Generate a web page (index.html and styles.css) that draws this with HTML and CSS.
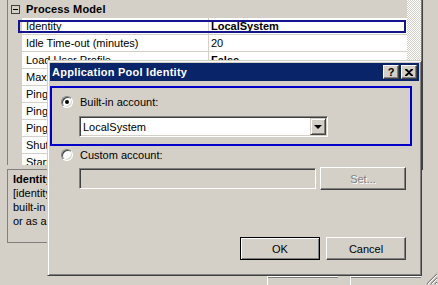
FILE: index.html
```html
<!DOCTYPE html>
<html>
<head>
<meta charset="utf-8">
<title>Application Pool Identity</title>
<link rel="stylesheet" href="styles.css">
</head>
<body>
<div class="screen">
  <div class="back-main">
    <div class="pgrid">
      <div class="rows">
        <div class="cat-row"><span class="toggle"></span><span class="cat-title">Process Model</span></div>
        <div class="prop selected"><span class="gut"></span><span class="name">Identity</span><span class="val bold">LocalSystem</span></div>
        <div class="prop"><span class="gut"></span><span class="name">Idle Time-out (minutes)</span><span class="val">20</span></div>
        <div class="prop"><span class="gut"></span><span class="name">Load User Profile</span><span class="val bold">False</span></div>
        <div class="prop"><span class="gut"></span><span class="name">Maximum Worker Processes</span><span class="val">1</span></div>
        <div class="prop"><span class="gut"></span><span class="name">Ping Enabled</span><span class="val">True</span></div>
        <div class="prop"><span class="gut"></span><span class="name">Ping Maximum Response Time (seconds)</span><span class="val">90</span></div>
        <div class="prop"><span class="gut"></span><span class="name">Ping Period (seconds)</span><span class="val">30</span></div>
        <div class="prop"><span class="gut"></span><span class="name">Shutdown Time Limit (seconds)</span><span class="val">90</span></div>
        <div class="prop"><span class="gut"></span><span class="name">Startup Time Limit (seconds)</span><span class="val">90</span></div>
      </div>
      <div class="vscroll"></div>
    </div>
    <div class="desc">
      <div class="desc-title">Identity</div>
      <div>[identityType, username, password] Configures the application pool to run as<br>built-in account, i.e. Network Service (recommended), Local System, Local Service,<br>or as a specific user identity.</div>
    </div>
    <div class="back-buttons">
      <span class="back-btn first"></span>
      <span class="back-btn second"></span>
    </div>
  </div>
  <div class="right-strip">
    <div class="strip-line"></div>
    <div class="grip">
      <svg width="12" height="12" viewBox="0 0 12 12">
        <path d="M11 1 L1 11 M11 5 L5 11 M11 9 L9 11" stroke="#808080" stroke-width="1.2" fill="none"/>
        <path d="M11 2 L2 11 M11 6 L6 11 M11 10 L10 11" stroke="#ffffff" stroke-width="1" fill="none"/>
      </svg>
    </div>
  </div>

  <div class="dialog">
    <div class="titlebar">
      <span class="title-text">Application Pool Identity</span>
      <span class="cap-btn help">?</span>
      <span class="cap-btn close">
        <svg width="8" height="7" viewBox="0 0 8 7"><path d="M0 0h2l2 2 2-2h2v1L5 3.5 8 6v1H6L4 5 2 7H0V6l3-2.5L0 1z" fill="#000"/></svg>
      </span>
    </div>
    <div class="client">
      <div class="focus-box">
        <div class="radio-row">
          <span class="radio checked"></span>
          <span class="radio-label">Built-in account:</span>
        </div>
        <div class="combo">
          <span class="combo-text">LocalSystem</span>
          <span class="combo-btn"><span class="arrow"></span></span>
        </div>
      </div>
      <div class="radio-row custom">
        <span class="radio"></span>
        <span class="radio-label">Custom account:</span>
      </div>
      <div class="custom-row">
        <span class="textbox disabled"></span>
        <span class="btn set disabled">Set...</span>
      </div>
      <div class="action-row">
        <span class="btn default">OK</span>
        <span class="btn">Cancel</span>
      </div>
    </div>
  </div>
</div>
</body>
</html>
```

FILE: styles.css
```css
* { box-sizing: border-box; margin: 0; padding: 0; }
html, body { width: 438px; height: 285px; overflow: hidden; background: #d4d0c8; }
body {
  font-family: "Liberation Sans", Arial, sans-serif;
  font-size: 11px;
  color: #000;
}
.screen {
  position: relative;
  width: 438px;
  height: 285px;
  overflow: hidden;
  display: flex;
}

/* ---------- underlying property grid ---------- */
.back-main {
  width: 421px;
  flex: none;
  display: flex;
  flex-direction: column;
  padding-left: 7px;
}
.pgrid {
  height: 165px;
  flex: none;
  display: flex;
  border-left: 1px solid #808080;
  overflow: hidden;
}
.rows { width: 399px; flex: none; display: flex; flex-direction: column; }
.cat-row {
  height: 18px;
  flex: none;
  display: flex;
  align-items: flex-start;
  background: #d4d0c8;
}
.toggle {
  position: relative;
  width: 9px;
  height: 9px;
  margin: 5px 0 0 3px;
  border: 1px solid #404040;
  flex: none;
}
.toggle::after {
  content: "";
  position: absolute;
  left: 1px;
  top: 3px;
  width: 5px;
  height: 1px;
  background: #000;
}
.cat-title { margin-left: 6px; font-weight: bold; line-height: 18px; letter-spacing: 0.15px; }
.prop { height: 17px; flex: none; display: flex; position: relative; }
.gut { width: 14px; flex: none; background: #d4d0c8; }
.name {
  width: 187px;
  flex: none;
  background: #fff;
  border-right: 1px solid #d4d0c8;
  border-bottom: 1px solid #d4d0c8;
  padding-left: 4px;
  line-height: 16px;
  white-space: nowrap;
  overflow: hidden;
}
.val {
  flex: 1;
  background: #fff;
  border-bottom: 1px solid #d4d0c8;
  padding-left: 2px;
  line-height: 16px;
  white-space: nowrap;
}
.bold { font-weight: bold; }
.selected::after {
  content: "";
  position: absolute;
  left: 10px;
  right: 1px;
  top: 2px;
  bottom: 2px;
  border: 2px solid #14148f;
}
.vscroll {
  width: 14px;
  flex: none;
  background-color: #fff;
  background-image: repeating-conic-gradient(#d4d0c8 0 25%, #ffffff 0 50%);
  background-size: 2px 2px;
}
.desc {
  margin-top: 4px;
  height: 74px;
  flex: none;
  border: 1px solid #808080;
  padding: 2px 5px;
  line-height: 14px;
  white-space: nowrap;
  overflow: hidden;
}
.desc-title { font-weight: bold; }
.back-buttons {
  margin-top: 33px;
  display: flex;
  padding-left: 260px;
  gap: 12px;
}
.back-btn {
  width: 73px;
  height: 12px;
  border-top: 1px solid #ffffff;
  border-left: 1px solid #ffffff;
  box-shadow: inset 0 1px 0 #808080;
}

.right-strip {
  width: 17px;
  flex: none;
  display: flex;
  flex-direction: column;
  justify-content: space-between;
  align-items: flex-end;
}
.strip-line {
  align-self: flex-start;
  width: 2px;
  height: 170px;
  border-left: 1px solid #808080;
  background: #404040;
}
.grip { width: 12px; height: 12px; display: flex; }

/* ---------- dialog ---------- */
.dialog {
  position: absolute;
  left: 47px;
  top: 60px;
  width: 375px;
  height: 216px;
  background: #d4d0c8;
  border: 1px solid;
  border-color: #d4d0c8 #404040 #404040 #d4d0c8;
  box-shadow: inset 1px 1px 0 #ffffff, inset -1px -1px 0 #808080;
  padding: 2px;
  display: flex;
  flex-direction: column;
}
.titlebar {
  height: 18px;
  flex: none;
  background: #0a246a;
  display: flex;
  align-items: center;
  padding: 0 2px 0 2px;
}
.title-text {
  color: #fff;
  font-weight: bold;
  letter-spacing: 0.25px;
  flex: 1;
  white-space: nowrap;
}
.cap-btn {
  width: 16px;
  height: 14px;
  flex: none;
  background: #d4d0c8;
  border: 1px solid;
  border-color: #ffffff #404040 #404040 #ffffff;
  box-shadow: inset -1px -1px 0 #808080;
  display: flex;
  align-items: center;
  justify-content: center;
  font-weight: bold;
  font-size: 11px;
  line-height: 12px;
}
.cap-btn.close { margin-left: 2px; }
.cap-btn.close svg { display: block; }

.client {
  flex: 1;
  display: flex;
  flex-direction: column;
}
.focus-box {
  margin-top: 5px;
  width: 362px;
  height: 60px;
  border: 2px solid #0000c8;
  display: flex;
  flex-direction: column;
}
.radio-row {
  display: flex;
  align-items: center;
  height: 12px;
  margin: 8px 0 0 9px;
}
.radio-row.custom { margin: 3px 0 0 11px; }
.radio {
  position: relative;
  width: 12px;
  height: 12px;
  flex: none;
  border-radius: 50%;
  background: #fff;
  border: 1px solid;
  border-color: #808080 #ffffff #ffffff #808080;
  box-shadow: inset 1px 1px 0 #404040, inset -1px -1px 0 #d4d0c8;
}
.radio.checked::after {
  content: "";
  position: absolute;
  left: 3px;
  top: 3px;
  width: 4px;
  height: 4px;
  border-radius: 50%;
  background: #000;
}
.radio-label { margin-left: 7px; white-space: nowrap; }

.combo {
  margin: 8px 0 0 27px;
  width: 249px;
  height: 21px;
  background: #fff;
  border: 1px solid;
  border-color: #808080 #ffffff #ffffff #808080;
  box-shadow: inset 1px 1px 0 #404040, inset -1px -1px 0 #d4d0c8;
  padding: 1px;
  display: flex;
  align-items: center;
}
.combo-text { flex: 1; padding-left: 2px; }
.combo-btn {
  width: 16px;
  height: 17px;
  flex: none;
  background: #d4d0c8;
  border: 1px solid;
  border-color: #d4d0c8 #404040 #404040 #d4d0c8;
  box-shadow: inset 1px 1px 0 #ffffff, inset -1px -1px 0 #808080;
  display: flex;
  align-items: center;
  justify-content: center;
}
.arrow {
  width: 0;
  height: 0;
  border-left: 4px solid transparent;
  border-right: 4px solid transparent;
  border-top: 4px solid #000;
}

.custom-row {
  display: flex;
  align-items: center;
  height: 23px;
  margin: 6px 0 0 29px;
}
.textbox {
  width: 237px;
  height: 21px;
  flex: none;
  background: #d4d0c8;
  border: 1px solid;
  border-color: #808080 #ffffff #ffffff #808080;
  box-shadow: inset 1px 1px 0 #404040, inset -1px -1px 0 #d4d0c8;
}
.btn {
  width: 80px;
  height: 23px;
  flex: none;
  background: #d4d0c8;
  border: 1px solid;
  border-color: #ffffff #404040 #404040 #ffffff;
  box-shadow: inset -1px -1px 0 #808080;
  display: flex;
  align-items: center;
  justify-content: center;
  white-space: nowrap;
}
.btn.set { width: 86px; margin-left: 4px; }
.btn.disabled { color: #808080; text-shadow: 1px 1px 0 #ffffff; }
.btn.default {
  border-color: #000;
  box-shadow: inset 1px 1px 0 #ffffff, inset -1px -1px 0 #808080;
}
.action-row {
  display: flex;
  gap: 6px;
  margin: 47px 0 0 190px;
}
```
